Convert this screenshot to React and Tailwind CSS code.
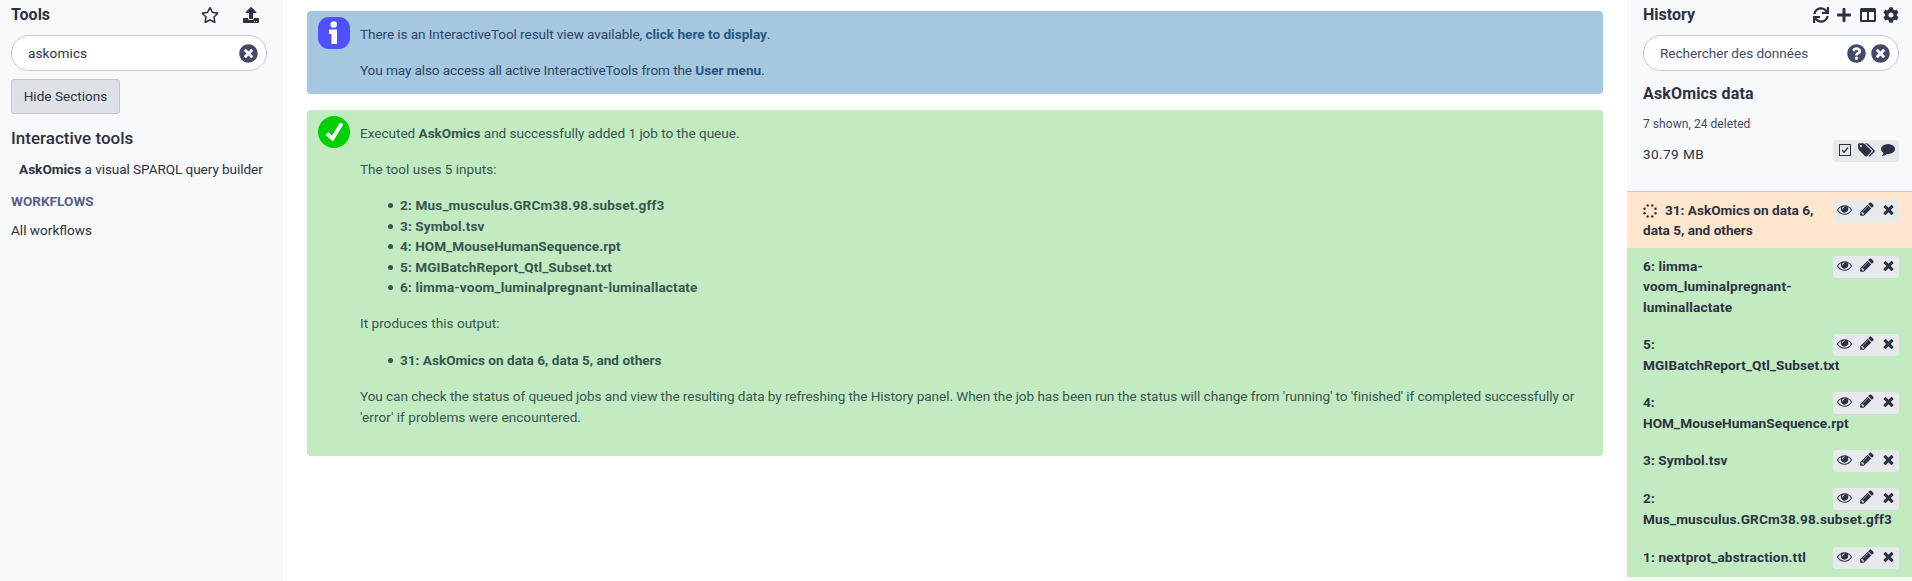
import { FaRegStar, FaUpload, FaTimesCircle, FaQuestionCircle, FaSync, FaPlus, FaColumns, FaCog } from "react-icons/fa";

const PATHS = {
  eye: "M1664 960q-152-236-381-353 61 104 61 225 0 185-131.5 316.5t-316.5 131.5-316.5-131.5-131.5-316.5q0-121 61-225-229 117-381 353 133 205 333.5 326.5t434.5 121.5 434.5-121.5 333.5-326.5zm-720-384q0-20-14-34t-34-14q-125 0-214.5 89.5t-89.5 214.5q0 20 14 34t34 14 34-14 14-34q0-86 61-147t147-61q20 0 34-14t14-34zm848 384q0 34-20 69-140 230-376.5 368.5t-499.5 138.5-499.5-139-376.5-368q-20-35-20-69t20-69q140-229 376.5-368t499.5-139 499.5 139 376.5 368q20 35 20 69z",
  pencil: "M491 1536l91-91-235-235-91 91v107h128v128h107zm523-928q0-22-22-22-10 0-17 7l-542 542q-7 7-7 17 0 22 22 22 10 0 17-7l542-542q7-7 7-17zm-54-192l416 416-832 832h-416v-416zm683 96q0 53-37 90l-166 166-416-416 166-165q36-38 90-38 53 0 91 38l235 234q37 39 37 91z",
  times: "M1490 1322q0 40-28 68l-136 136q-28 28-68 28t-68-28l-294-294-294 294q-28 28-68 28t-68-28l-136-136q-28-28-28-68t28-68l294-294-294-294q-28-28-28-68t28-68l136-136q28-28 68-28t68 28l294 294 294-294q28-28 68-28t68 28l136 136q28 28 28 68t-28 68l-294 294 294 294q28 28 28 68z",
  comment: "M1792 896q0 174-120 321.5t-326 233-450 85.5q-70 0-145-8-198 175-460 242-49 14-114 22-17 2-30.5-9t-17.5-29v-1q-3-4-.5-12t2-10 4.5-9.5l6-9 7-8.5 8-9q7-8 31-34.5t34.5-38 31-39.5 32.5-51 27-59 26-76q-157-89-247.5-220t-90.5-281q0-130 71-248.5t191-204.5 286-136.5 348-50.5 348 50.5 286 136.5 191 204.5 71 248.5z",
  tags: "M576 448q0-53-37.5-90.5t-90.5-37.5-90.5 37.5-37.5 90.5 37.5 90.5 90.5 37.5 90.5-37.5 37.5-90.5zm1067 576q0 53-37 90l-491 492q-39 37-91 37-53 0-90-37l-715-716q-38-37-64.5-101t-26.5-117v-416q0-52 38-90t90-38h416q53 0 117 26.5t102 64.5l715 714q37 39 37 91zm384 0q0 53-37 90l-491 492q-39 37-91 37-36 0-59-14t-53-45l470-470q37-37 37-90 0-52-37-91l-715-714q-38-38-102-64.5t-117-26.5h224q53 0 117 26.5t102 64.5l715 714q37 39 37 91z",
};

function Glyph({ name, className, wide }) {
  return (
    <svg viewBox={wide ? "0 0 2048 1792" : "0 0 1792 1792"} className={className} fill="currentColor">
      <path d={PATHS[name]} />
    </svg>
  );
}

function SearchBox({ text, className, children }) {
  return (
    <div className="flex h-9 w-64 items-center rounded-full border border-[#c5c7dc] bg-white pr-2 pl-4">
      <span className={className}>{text}</span>
      <span className="ml-auto flex gap-[5px] text-[19px] text-[#434966]">{children}</span>
    </div>
  );
}

function ToolsPanel() {
  return (
    <aside className="w-[283px] shrink-0 bg-[#f8f9fb] pl-[11px]">
      <div className="flex h-[35px] items-start pt-[3px]">
        <h1 className="text-base leading-6 font-bold">Tools</h1>
        <div className="ml-auto flex gap-6 pt-[4px] pr-[24px] text-base">
          <FaRegStar className="w-[18px]" />
          <FaUpload />
        </div>
      </div>
      <SearchBox text="askomics" className="tracking-[0.1px]">
        <FaTimesCircle />
      </SearchBox>
      <button className="mt-2 block h-[35px] w-[109px] rounded-[3px] border border-[#c3c8d4] bg-[#dee2e6] text-center">
        Hide Sections
      </button>
      <h2 className="mt-[12px] text-[17px] leading-6 font-medium">Interactive tools</h2>
      <p className="mt-[9px] ml-2 whitespace-nowrap">
        <b>AskOmics</b> <span className="tracking-[-0.080px]">a visual SPARQL query builder</span>
      </p>
      <h3 className="mt-[12px] font-bold text-[#58608a]">WORKFLOWS</h3>
      <p className="mt-[8px]">All workflows</p>
    </aside>
  );
}

function Item({ className, children }) {
  return (
    <li className={"flex items-center " + className}>
      <span className="mt-px mr-[7px] size-[5px] rounded-full bg-current" />
      {children}
    </li>
  );
}

function MainPanel() {
  return (
    <main className="flex-1 px-6 pt-[11px]">
      <section className="flex h-[83px] gap-[10px] rounded bg-[#a6c7e0] pt-[6px] pl-[11px] text-[#2c4565]">
        <svg viewBox="0 0 32 32" className="size-8 shrink-0">
          <rect width="32" height="32" rx="11" fill="#5050ff" />
          <circle cx="15.7" cy="7.5" r="3.2" fill="#fff" />
          <path d="M11 12.500h8v14.500h-5.500v-10h-2.500z" fill="#fff" />
        </svg>
        <div className="pt-[7px]">
          <p>
            <span className="tracking-[-0.090px]">There is an InteractiveTool result view available, </span>
            <b className="text-[#265781]">click here to display</b>.
          </p>
          <p className="mt-[15.600px]">
            <span className="tracking-[-0.115px]">You may also access all active InteractiveTools from the </span>
            <b className="text-[#265781]">User menu</b>.
          </p>
        </div>
      </section>
      <section className="mt-4 flex h-[346px] gap-[10px] rounded bg-[#c2ebc2] pt-[6px] pl-[11px] text-[#3a5550]">
        <svg viewBox="0 0 32 32" className="size-8 shrink-0">
          <circle cx="16" cy="16" r="16" fill="#00d000" />
          <path d="M7.500 19l3-3 3.500 3.500 8-13 3.500 1.800-10.500 17.200z" fill="#fff" />
        </svg>
        <div className="pt-[7px]">
          <p className="tracking-[-0.037px]">
            Executed <b>AskOmics</b> and successfully added 1 job to the queue.
          </p>
          <p className="mt-[15.600px]">The tool uses 5 inputs:</p>
          <ul className="mt-[15.600px] pl-7 leading-[20.500px] font-bold">
            <Item className="tracking-[0.150px]">2: Mus_musculus.GRCm38.98.subset.gff3</Item>
            <Item className="tracking-[0.090px]">3: Symbol.tsv</Item>
            <Item className="tracking-[0.060px]">4: HOM_MouseHumanSequence.rpt</Item>
            <Item className="tracking-[0.090px]">5: MGIBatchReport_Qtl_Subset.txt</Item>
            <Item className="tracking-[0.165px]">6: limma-voom_luminalpregnant-luminallactate</Item>
          </ul>
          <p className="mt-[15.200px]">It produces this output:</p>
          <ul className="mt-[16.500px] pl-7 font-bold">
            <Item>31: AskOmics on data 6, data 5, and others</Item>
          </ul>
          <p className="mt-[15.800px] w-[1230px] leading-[21px] tracking-[-0.075px]">
            You can check the status of queued jobs and view the resulting data by refreshing the History panel. When the
            job has been run the status will change from 'running' to 'finished' if completed successfully or
            <br />
            <span className="tracking-[0.030px]">'error' if problems were encountered.</span>
          </p>
        </div>
      </section>
    </main>
  );
}

function Spinner() {
  const dots = [
    [4.7, 1.5],
    [9.3, 1.5],
    [12.5, 4.7],
    [12.5, 9.3],
    [9.3, 12.5],
    [4.7, 12.5],
    [1.5, 9.3],
    [1.5, 4.7],
  ];
  return (
    <svg viewBox="0 0 14 14" className="mr-[8px] inline size-[14px]" fill="currentColor">
      {dots.map(([x, y], i) => (
        <circle key={i} cx={x} cy={y} r="1.2" />
      ))}
    </svg>
  );
}

function Dataset({ lines, pending, className }) {
  return (
    <li className={"flex pl-4 " + className}>
      <div className="w-[190px] shrink-0 pt-[7.500px] font-bold whitespace-nowrap">
        {lines.map((line, i) => (
          <div key={line}>
            {pending && i === 0 && <Spinner />}
            {line}
          </div>
        ))}
      </div>
      <div className="mt-2 flex h-[22px] w-[66px] shrink-0 rounded-[3px] bg-[#e7eaed]">
        <Glyph name="eye" className="mt-[2px] ml-[4px] size-[15px]" />
        <Glyph name="pencil" className="mt-px ml-[7px] size-4" />
        <Glyph name="times" className="mt-[2px] ml-[6px] size-[15px]" />
      </div>
    </li>
  );
}

function HistoryPanel() {
  return (
    <aside className="flex w-[285px] shrink-0 flex-col bg-[#f8f9fb]">
      <div className="h-[191px] shrink-0 pl-4">
        <div className="flex h-[35px] w-64 items-start pt-[3px]">
          <h1 className="text-base leading-6 font-bold">History</h1>
          <div className="ml-auto flex gap-[7.500px] pt-[4px] text-base">
            <FaSync />
            <FaPlus />
            <FaColumns />
            <FaCog />
          </div>
        </div>
        <SearchBox text="Rechercher des données" className="tracking-[-0.030px] text-[#434966]">
          <FaQuestionCircle />
          <FaTimesCircle />
        </SearchBox>
        <h2 className="mt-[11px] text-base leading-6 font-bold tracking-[0.150px]">AskOmics data</h2>
        <p className="mt-[9px] text-[12px] leading-[18px] tracking-[0.060px] text-[#434966]">7 shown, 24 deleted</p>
        <div className="mt-[7px] flex w-64">
          <p className="pt-[4px] tracking-[0.400px]">30.79 MB</p>
          <div className="ml-auto flex h-[22px] w-[66px] rounded-[3px] bg-[#e7eaed]">
            <svg viewBox="0 0 12 12" className="mt-1 ml-[6px] size-3" fill="none" stroke="currentColor">
              <rect x="0.5" y="0.5" width="11" height="11" />
              <path d="M3 6l2 2.200 4-4.500" strokeWidth="1.4" />
            </svg>
            <Glyph name="tags" wide className="mt-[2px] ml-[6px] h-4 w-[18px]" />
            <Glyph name="comment" className="mt-[2px] ml-[6px] size-[14px]" />
          </div>
        </div>
      </div>
      <ul className="border-t border-[#c5c7dc]">
        <Dataset
          pending
          lines={["31: AskOmics on data 6,", "data 5, and others"]}
          className="h-14 bg-[#ffe6cd]"
        />
        <Dataset
          lines={["6: limma-", "voom_luminalpregnant-", "luminallactate"]}
          className="h-[78px] bg-[#c2ebc2] leading-[20.800px] tracking-[0.170px]"
        />
        <Dataset
          lines={["5:", "MGIBatchReport_Qtl_Subset.txt"]}
          className="h-[58px] bg-[#c2ebc2] leading-[21.500px] tracking-[0.090px]"
        />
        <Dataset
          lines={["4:", "HOM_MouseHumanSequence.rpt"]}
          className="h-[58px] bg-[#c2ebc2] leading-[21.800px] tracking-[0.070px]"
        />
        <Dataset lines={["3: Symbol.tsv"]} className="h-[38px] bg-[#c2ebc2] tracking-[0.090px]" />
        <Dataset
          lines={["2:", "Mus_musculus.GRCm38.98.subset.gff3"]}
          className="h-[59px] bg-[#c2ebc2] leading-[21.800px] tracking-[0.150px]"
        />
        <Dataset lines={["1: nextprot_abstraction.ttl"]} className="h-[38px] bg-[#c2ebc2] tracking-[0.180px]" />
      </ul>
    </aside>
  );
}

export default function App() {
  return (
    <div className="flex h-[581px] w-[1912px] overflow-hidden bg-white font-['Roboto',sans-serif] text-[13.600px] leading-[20.400px] text-[#2c3143]">
      <ToolsPanel />
      <MainPanel />
      <HistoryPanel />
    </div>
  );
}
